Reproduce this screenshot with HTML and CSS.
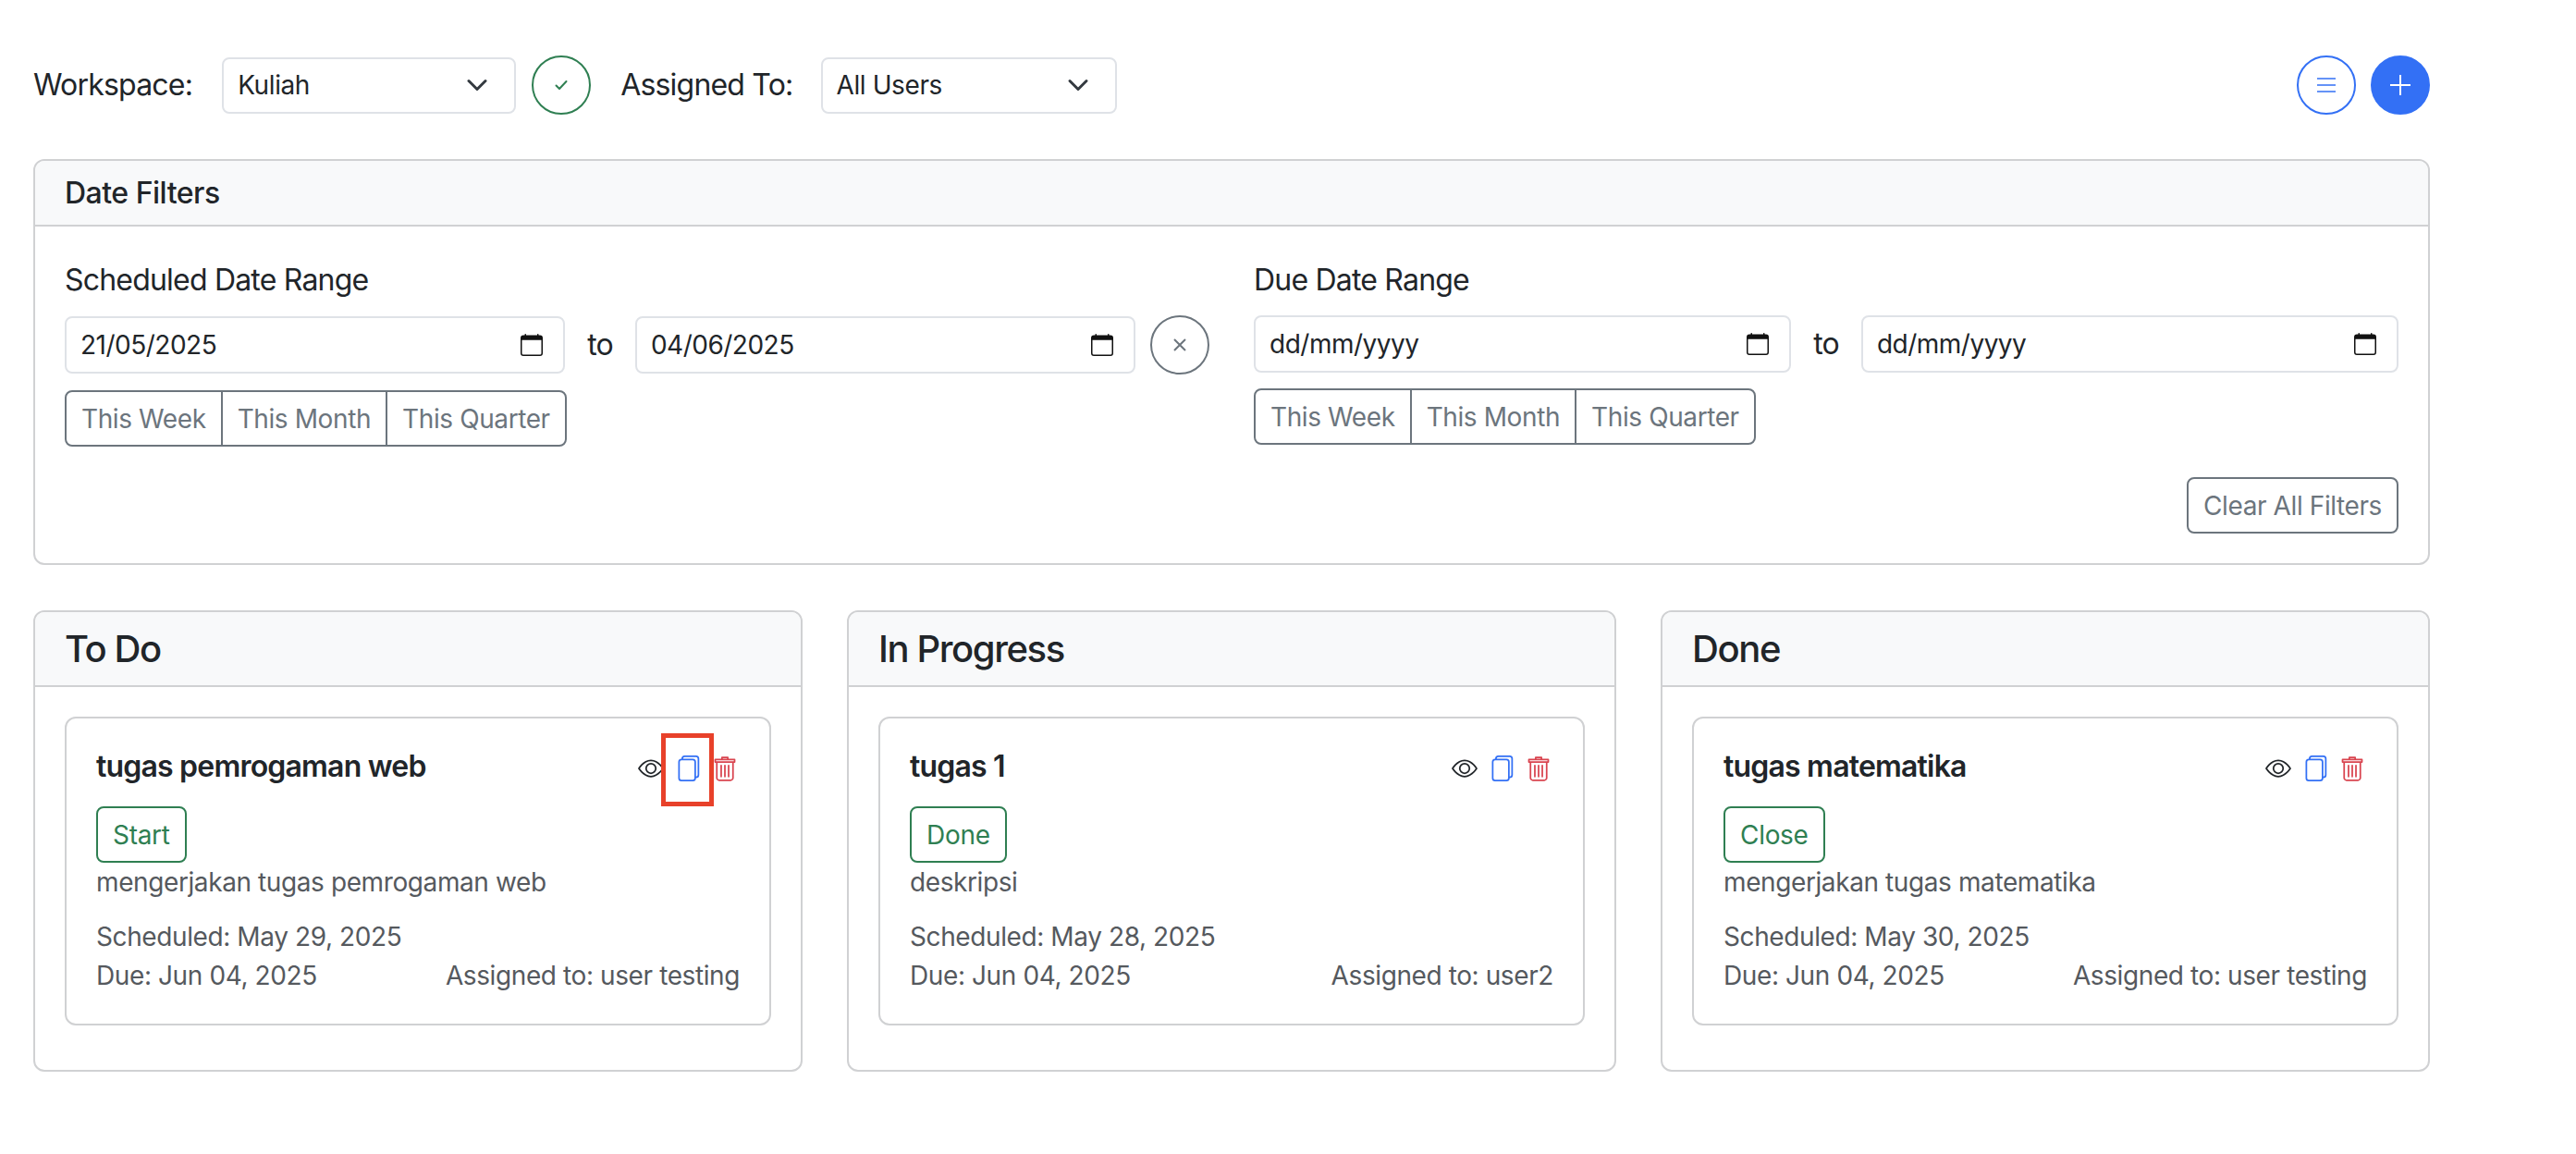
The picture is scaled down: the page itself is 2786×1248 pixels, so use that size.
FILE: index.html
```html
<!DOCTYPE html>
<html lang="en">
<head>
    <meta charset="utf-8">
    <title>Task board</title>
    <link rel="stylesheet" href="styles.css">
</head>
<body>
    <svg class="icon-defs" aria-hidden="true">
        <symbol id="i-calendar" viewBox="0 0 16 16"><path fill="currentColor" d="M3.5 0a.5.5 0 0 1 .5.5V1h8V.5a.5.5 0 0 1 1 0V1h1a2 2 0 0 1 2 2v11a2 2 0 0 1-2 2H2a2 2 0 0 1-2-2V3a2 2 0 0 1 2-2h1V.5a.5.5 0 0 1 .5-.5zM1 4.5V14a1 1 0 0 0 1 1h12a1 1 0 0 0 1-1V4.5H1z"/></symbol>
        <symbol id="i-chevron" viewBox="0 0 16 16"><path fill="none" stroke="currentColor" stroke-width="2" stroke-linecap="round" stroke-linejoin="round" d="M2 5l6 6 6-6"/></symbol>
        <symbol id="i-eye" viewBox="0 0 16 16"><path fill="currentColor" d="M16 8s-3-5.5-8-5.5S0 8 0 8s3 5.5 8 5.5S16 8 16 8zM1.173 8a13.133 13.133 0 0 1 1.66-2.043C4.12 4.668 5.88 3.5 8 3.5c2.12 0 3.879 1.168 5.168 2.457A13.133 13.133 0 0 1 14.828 8c-.058.087-.122.183-.195.288-.335.48-.83 1.12-1.465 1.755C11.879 11.332 10.119 12.5 8 12.5c-2.12 0-3.879-1.168-5.168-2.457A13.134 13.134 0 0 1 1.172 8z"/><path fill="currentColor" d="M8 5.5a2.5 2.5 0 1 0 0 5 2.5 2.5 0 0 0 0-5zM4.5 8a3.5 3.5 0 1 1 7 0 3.5 3.5 0 0 1-7 0z"/></symbol>
        <symbol id="i-files" viewBox="0 0 16 16"><path fill="currentColor" d="M13 0H6a2 2 0 0 0-2 2 2 2 0 0 0-2 2v10a2 2 0 0 0 2 2h7a2 2 0 0 0 2-2 2 2 0 0 0 2-2V2a2 2 0 0 0-2-2zm0 13V4a2 2 0 0 0-2-2H5a1 1 0 0 1 1-1h7a1 1 0 0 1 1 1v10a1 1 0 0 1-1 1zM3 4a1 1 0 0 1 1-1h7a1 1 0 0 1 1 1v10a1 1 0 0 1-1 1H4a1 1 0 0 1-1-1V4z"/></symbol>
        <symbol id="i-trash" viewBox="0 0 16 16"><path fill="none" stroke="currentColor" stroke-linecap="round" stroke-linejoin="round" d="M2 2.5h12v1.5H2zM6.2 2.5V1.2h3.6v1.3M3 4v9.8a1.5 1.5 0 0 0 1.5 1.5h7a1.5 1.5 0 0 0 1.5-1.5V4M5.7 6.2v6.8M8 6.2v6.8M10.3 6.2v6.8"/></symbol>
    </svg>

    <div class="toolbar">
        <label class="toolbar-label">Workspace:</label>
        <div class="select select-workspace">
            <span>Kuliah</span>
            <svg class="chevron"><use href="#i-chevron"/></svg>
        </div>
        <button class="circle-btn circle-success" type="button">
            <svg width="16" height="16" viewBox="0 0 16 16"><path fill="none" stroke="currentColor" stroke-width="2" stroke-linecap="round" stroke-linejoin="round" d="M2.5 8.5l3.5 3.5 7.5-8"/></svg>
        </button>
        <label class="toolbar-label toolbar-label-assigned">Assigned To:</label>
        <div class="select select-assigned">
            <span>All Users</span>
            <svg class="chevron"><use href="#i-chevron"/></svg>
        </div>
        <div class="toolbar-actions">
            <button class="circle-btn circle-primary" type="button">
                <svg width="20" height="18" viewBox="0 0 20 18"><path fill="none" stroke="currentColor" stroke-width="1.6" d="M0 2h20M0 9h20M0 16h20"/></svg>
            </button>
            <button class="circle-btn circle-primary-solid" type="button">
                <svg width="22" height="22" viewBox="0 0 22 22"><path fill="none" stroke="currentColor" stroke-width="2" d="M11 0v22M0 11h22"/></svg>
            </button>
        </div>
    </div>

    <section class="card filters">
        <header class="card-header filters-header">Date Filters</header>
        <div class="filters-body">
            <div class="filters-grid">
                <div class="filter-group">
                    <div class="filter-label">Scheduled Date Range</div>
                    <div class="date-row">
                        <div class="date-input"><span>21/05/2025</span><svg class="calendar"><use href="#i-calendar"/></svg></div>
                        <span class="date-to">to</span>
                        <div class="date-input"><span>04/06/2025</span><svg class="calendar"><use href="#i-calendar"/></svg></div>
                        <button class="circle-btn circle-muted" type="button">
                            <svg width="14" height="14" viewBox="0 0 14 14"><path fill="none" stroke="currentColor" stroke-width="2" d="M1 1l12 12M13 1L1 13"/></svg>
                        </button>
                    </div>
                    <div class="btn-group">
                        <button type="button">This Week</button>
                        <button type="button">This Month</button>
                        <button type="button">This Quarter</button>
                    </div>
                </div>
                <div class="filter-group">
                    <div class="filter-label">Due Date Range</div>
                    <div class="date-row">
                        <div class="date-input"><span>dd/mm/yyyy</span><svg class="calendar"><use href="#i-calendar"/></svg></div>
                        <span class="date-to">to</span>
                        <div class="date-input"><span>dd/mm/yyyy</span><svg class="calendar"><use href="#i-calendar"/></svg></div>
                    </div>
                    <div class="btn-group">
                        <button type="button">This Week</button>
                        <button type="button">This Month</button>
                        <button type="button">This Quarter</button>
                    </div>
                </div>
            </div>
            <div class="filters-footer">
                <button class="btn-outline" type="button">Clear All Filters</button>
            </div>
        </div>
    </section>

    <div class="board">
        <section class="card column">
            <header class="card-header column-header">To Do</header>
            <div class="column-body">
                <article class="card task">
                    <div class="task-top">
                        <h3 class="task-title">tugas pemrogaman web</h3>
                        <div class="task-actions">
                            <svg class="task-icon icon-view"><use href="#i-eye"/></svg>
                            <span class="task-icon-wrap">
                                <svg class="task-icon icon-copy"><use href="#i-files"/></svg>
                                <span class="highlight-box"></span>
                            </span>
                            <svg class="task-icon icon-delete"><use href="#i-trash"/></svg>
                        </div>
                    </div>
                    <button class="btn-status" type="button">Start</button>
                    <p class="task-desc">mengerjakan tugas pemrogaman web</p>
                    <div class="task-meta">Scheduled: May 29, 2025</div>
                    <div class="task-meta task-meta-row"><span>Due: Jun 04, 2025</span><span>Assigned to: user testing</span></div>
                </article>
            </div>
        </section>

        <section class="card column">
            <header class="card-header column-header">In Progress</header>
            <div class="column-body">
                <article class="card task">
                    <div class="task-top">
                        <h3 class="task-title">tugas 1</h3>
                        <div class="task-actions">
                            <svg class="task-icon icon-view"><use href="#i-eye"/></svg>
                            <svg class="task-icon icon-copy"><use href="#i-files"/></svg>
                            <svg class="task-icon icon-delete"><use href="#i-trash"/></svg>
                        </div>
                    </div>
                    <button class="btn-status" type="button">Done</button>
                    <p class="task-desc">deskripsi</p>
                    <div class="task-meta">Scheduled: May 28, 2025</div>
                    <div class="task-meta task-meta-row"><span>Due: Jun 04, 2025</span><span>Assigned to: user2</span></div>
                </article>
            </div>
        </section>

        <section class="card column">
            <header class="card-header column-header">Done</header>
            <div class="column-body">
                <article class="card task">
                    <div class="task-top">
                        <h3 class="task-title">tugas matematika</h3>
                        <div class="task-actions">
                            <svg class="task-icon icon-view"><use href="#i-eye"/></svg>
                            <svg class="task-icon icon-copy"><use href="#i-files"/></svg>
                            <svg class="task-icon icon-delete"><use href="#i-trash"/></svg>
                        </div>
                    </div>
                    <button class="btn-status" type="button">Close</button>
                    <p class="task-desc">mengerjakan tugas matematika</p>
                    <div class="task-meta">Scheduled: May 30, 2025</div>
                    <div class="task-meta task-meta-row"><span>Due: Jun 04, 2025</span><span>Assigned to: user testing</span></div>
                </article>
            </div>
        </section>
    </div>
</body>
</html>
```

FILE: styles.css
```css
:root {
    --border-card: #d0d1d3;
    --border-input: #dfe2e7;
    --text: #212529;
    --muted: #6c757d;
    --primary: #3370f5;
    --success: #2f7f52;
    --danger: #d9444f;
}

* {
    box-sizing: border-box;
}

html {
    color: var(--text);
    font-family: Inter, "Noto Sans", sans-serif;
    font-size: 32px;
    line-height: 1.5;
    letter-spacing: -0.8px;
}

body {
    margin: 0;
    padding: 60px 158px 0 36px;
    background: white;
}

button {
    font-family: inherit;
    letter-spacing: inherit;
    background: white;
    cursor: pointer;
}

.icon-defs {
    display: none;
}

/* --- Top toolbar --- */
.toolbar {
    display: flex;
    align-items: center;
    height: 64px;
    margin-bottom: 48px;
}

.toolbar-label {
    margin-right: 32px;
}

.toolbar-label-assigned {
    margin-left: 32px;
    margin-right: 30px;
}

.select {
    display: flex;
    justify-content: space-between;
    align-items: center;
    height: 61px;
    padding: 0 28px 0 15px;
    border: 2px solid var(--border-input);
    border-radius: 8px;
    font-size: 28px;
    letter-spacing: -0.4px;
}

.select-workspace {
    width: 318px;
    margin-right: 17px;
}

.select-assigned {
    width: 320px;
}

.chevron {
    width: 24px;
    height: 24px;
    color: #343a40;
}

.toolbar-actions {
    display: flex;
    gap: 16px;
    margin-left: auto;
}

.circle-btn {
    display: flex;
    flex: none;
    justify-content: center;
    align-items: center;
    width: 64px;
    height: 64px;
    padding: 0;
    border: 2px solid;
    border-radius: 50%;
}

.circle-success {
    color: var(--success);
}

.circle-primary {
    color: var(--primary);
}

.circle-primary-solid {
    color: white;
    background: var(--primary);
    border-color: var(--primary);
}

.circle-muted {
    margin-left: 16px;
    color: var(--muted);
}

/* --- Cards --- */
.card {
    background: white;
    border: 2px solid var(--border-card);
    border-radius: 12px;
}

.card-header {
    background: #f8f9fa;
    border-bottom: 2px solid var(--border-card);
    border-radius: 10px 10px 0 0;
    padding: 16px 32px;
    line-height: 1.2;
    font-weight: 500;
}

.filters-header {
    height: 71px;
    font-size: 32px;
    letter-spacing: -0.5px;
}

.filters-body {
    padding: 32px;
}

.filters-grid {
    display: grid;
    grid-template-columns: 1fr 1fr;
    gap: 48px;
}

.filter-label {
    padding-top: 2px;
    margin-bottom: 14px;
}

.date-row {
    display: flex;
    align-items: center;
    min-height: 62px;
}

.date-input {
    display: flex;
    flex: 1;
    justify-content: space-between;
    align-items: center;
    height: 62px;
    padding: 0 22px 0 15px;
    border: 2px solid var(--border-input);
    border-radius: 8px;
    font-size: 28px;
    letter-spacing: -0.5px;
}

.calendar {
    width: 24px;
    height: 24px;
    color: #111;
}

.date-to {
    flex: none;
    margin: 0 24px;
}

.btn-group {
    display: inline-flex;
    margin-top: 17px;
    border: 2px solid var(--muted);
    border-radius: 8px;
}

.btn-group button {
    height: 57px;
    padding: 0 16px;
    border: 0;
    border-left: 2px solid var(--muted);
    background: none;
    color: var(--muted);
    font-size: 28px;
    letter-spacing: -0.4px;
}

.btn-group button:first-child {
    border-left: 0;
}

.filters-footer {
    display: flex;
    justify-content: flex-end;
    margin-top: 33px;
}

.btn-outline {
    height: 61px;
    padding: 0 16px;
    border: 2px solid var(--muted);
    border-radius: 8px;
    color: var(--muted);
    font-size: 28px;
    letter-spacing: -0.4px;
}

/* --- Board --- */
.board {
    display: grid;
    grid-template-columns: repeat(3, 1fr);
    gap: 48px;
    margin-top: 49px;
}

.column-header {
    height: 81px;
    font-size: 40px;
    letter-spacing: -1.4px;
}

.column-body {
    padding: 32px 32px 48px;
}

.task {
    padding: 33px 32px 31px;
    font-size: 28px;
    letter-spacing: -0.4px;
}

.task-top {
    display: flex;
    justify-content: space-between;
    align-items: flex-start;
    margin-bottom: 24px;
}

.task-title {
    margin: 0;
    font-size: 32px;
    font-weight: 600;
    line-height: 38px;
    letter-spacing: -0.8px;
}

.task-actions {
    display: flex;
    gap: 12px;
    margin-right: 2px;
    padding-top: 7px;
}

.task-icon {
    display: block;
    width: 28px;
    height: 28px;
}

.task-icon-wrap {
    position: relative;
}

.icon-view {
    color: var(--text);
}

.icon-copy {
    color: var(--primary);
}

.icon-delete {
    color: var(--danger);
}

.highlight-box {
    position: absolute;
    top: -24px;
    bottom: -27px;
    left: -15px;
    right: -14px;
    border: 5px solid #e8412a;
}

.btn-status {
    display: block;
    height: 61px;
    padding: 0 16px;
    border: 2px solid var(--success);
    border-radius: 8px;
    color: var(--success);
    font-size: 28px;
    letter-spacing: -0.3px;
}

.task-desc {
    margin: 0 0 17px;
    color: #55595e;
}

.task-meta {
    color: #55595e;
}

.task-meta-row {
    display: flex;
    justify-content: space-between;
}
```
